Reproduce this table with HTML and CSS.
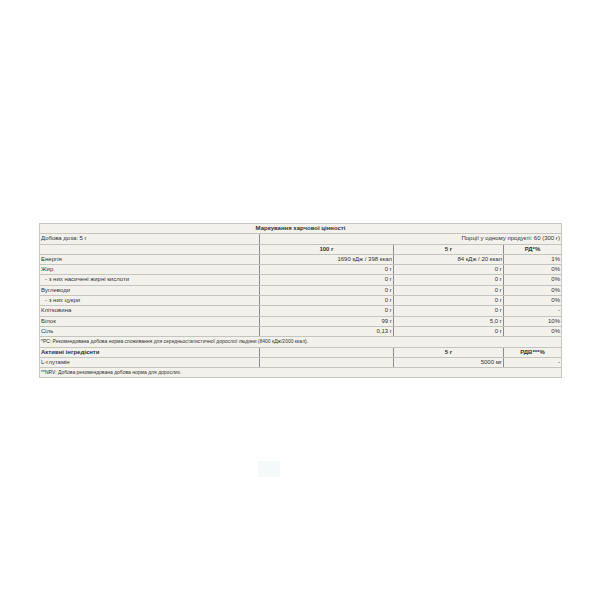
FILE: index.html
```html
<!DOCTYPE html>
<html lang="uk">
<head>
<meta charset="utf-8">
<link rel="stylesheet" href="styles.css">
</head>
<body>
<div class="page">
  <table class="nutri">
    <colgroup>
      <col class="c1"><col class="c2"><col class="c3"><col class="c4">
    </colgroup>
    <tr><td colspan="4" class="title">Маркування харчової цінності</td></tr>
    <tr><td>Добова доза: 5 г</td><td colspan="3" class="r">Порції у одному продукті: 60 (300 г)</td></tr>
    <tr><td></td><td class="h">100 г</td><td class="h">5 г</td><td class="h">РД*%</td></tr>
    <tr><td>Енергія</td><td class="r">1690 кДж / 398 ккал</td><td class="r">84 кДж / 20 ккал</td><td class="r">1%</td></tr>
    <tr><td>Жир</td><td class="r">0 г</td><td class="r">0 г</td><td class="r">0%</td></tr>
    <tr><td class="sub">- з них насичені жирні кислоти</td><td class="r">0 г</td><td class="r">0 г</td><td class="r">0%</td></tr>
    <tr><td>Вуглеводи</td><td class="r">0 г</td><td class="r">0 г</td><td class="r">0%</td></tr>
    <tr><td class="sub">- з них цукри</td><td class="r">0 г</td><td class="r">0 г</td><td class="r">0%</td></tr>
    <tr><td>Клітковина</td><td class="r">0 г</td><td class="r">0 г</td><td class="r">-</td></tr>
    <tr><td>Білок</td><td class="r">99 г</td><td class="r">5,0 г</td><td class="r">10%</td></tr>
    <tr><td>Сіль</td><td class="r">0,13 г</td><td class="r">0 г</td><td class="r">0%</td></tr>
    <tr><td colspan="4" class="note">*РС: Рекомендована добова норма споживання для середньостатистичної дорослої людини (8400 кДж/2000 ккал).</td></tr>
    <tr><td class="b">Активні інгредієнти</td><td></td><td class="h">5 г</td><td class="h">РДВ***%</td></tr>
    <tr><td>L-глутамін</td><td></td><td class="r">5000 мг</td><td class="r">-</td></tr>
    <tr><td colspan="4" class="note">**NRV: Добова рекомендована добова норма для дорослих.</td></tr>
  </table>
  <div class="faint"></div>
</div>
</body>
</html>
```
FILE: styles.css
```css
html, body {
  margin: 0;
  padding: 0;
  background: #ffffff;
}
.page {
  padding: 223px 0 0 39px;
  font-family: "Liberation Sans", Arial, sans-serif;
}
.nutri {
  width: 522px;
  border-collapse: collapse;
  border: 1px solid #c6c6c2;
  table-layout: fixed;
  font-size: 6px;
  color: #333;
}
.c1 { width: 220px; }
.c2 { width: 134px; }
.c3 { width: 110px; }
.c4 { width: 58px; }
.nutri td {
  background: #f2f1ec;
  border-top: 1px solid #c4c4c0;
  border-bottom: 1px solid #c4c4c0;
  border-left: 1px solid #8c8c88;
  border-right: 1px solid #8c8c88;
  height: 9.3px;
  padding: 0 1px;
  line-height: 9.3px;
  white-space: nowrap;
  overflow: hidden;
}
.nutri td[colspan="4"] {
  border-left-color: #c6c6c2;
  border-right-color: #c6c6c2;
}
.nutri td:first-child { border-left-color: #c6c6c2; }
.nutri td:last-child { border-right-color: #c6c6c2; }
.nutri td.title {
  text-align: center;
  font-weight: bold;
}
.nutri td.r { text-align: right; }
.nutri td.h { text-align: center; font-weight: bold; }
.nutri td.b { font-weight: bold; }
.nutri td.sub { padding-left: 5px; }
.nutri td.note { font-size: 5px; }
.faint {
  width: 22px;
  height: 16px;
  margin: 83px 0 0 219px;
  background: #f6f9fa;
}
```
